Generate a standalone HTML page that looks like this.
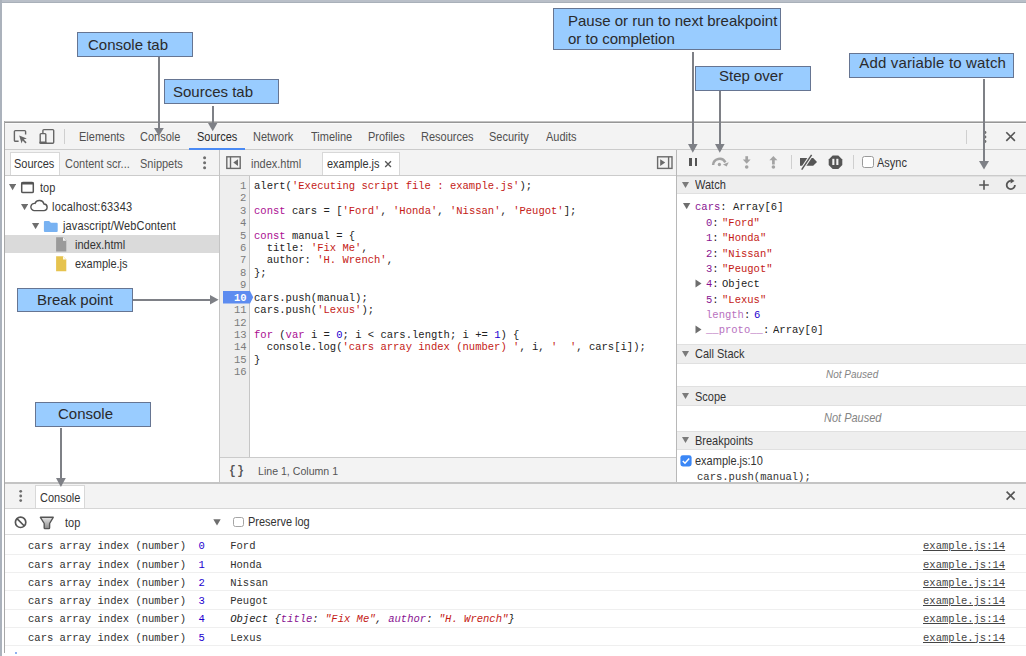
<!DOCTYPE html>
<html><head><meta charset="utf-8"><style>
html,body{margin:0;padding:0;}
body{width:1026px;height:656px;position:relative;overflow:hidden;background:#fff;}
body>div,body>svg{position:absolute;}
.s{position:absolute;transform-origin:0 0;font-family:"Liberation Sans",sans-serif;white-space:pre;}
.m{position:absolute;transform-origin:0 0;font-family:"Liberation Mono",monospace;white-space:pre;}
i{font-style:italic}
</style></head><body>
<div style="left:0px;top:0px;width:1026px;height:2px;background:#b9bfc8;"></div>
<div style="left:0px;top:2px;width:1026px;height:1px;background:#a9b0b9;"></div>
<div style="left:0px;top:0px;width:2px;height:656px;background:#abb2bc;"></div>
<div style="left:4px;top:121px;width:1022px;height:1px;background:#c2c2c2;"></div>
<div style="left:4px;top:122px;width:1022px;height:1px;background:#969696;"></div>
<div style="left:5px;top:123px;width:1021px;height:1px;background:#fafafa;"></div>
<div style="left:4px;top:121px;width:1px;height:532px;background:#a8a8a8;"></div>
<div style="left:5px;top:124px;width:1021px;height:25px;background:#f3f3f3;"></div>
<div style="left:5px;top:149px;width:1021px;height:1px;background:#cbcbcb;"></div>
<div style="left:5px;top:150px;width:1021px;height:25px;background:#f3f3f3;"></div>
<div style="left:5px;top:175px;width:1021px;height:1px;background:#cbcbcb;"></div>
<svg style="left:12px;top:128px;" width="18" height="18" viewBox="0 0 18 18"><path d="M6.6 13.2H3.4a1 1 0 0 1-1-1V3.6a1 1 0 0 1 1-1h9.2a1 1 0 0 1 1 1V6.4" fill="none" stroke="#666" stroke-width="1.4"/><path d="M7.2 7.6l7.6 2.8-3.1 1 2.9 2.9-1.1 1.1-2.9-2.9-1 3.1z" fill="#666"/></svg>
<svg style="left:38px;top:128px;" width="18" height="18" viewBox="0 0 18 18"><rect x="4.9" y="1.6" width="10.8" height="13.6" rx="1" fill="none" stroke="#666" stroke-width="1.4"/><rect x="2.2" y="5.6" width="5.6" height="9.6" rx="0.8" fill="#f3f3f3" stroke="#666" stroke-width="1.4"/><rect x="1.5" y="13.6" width="6.9" height="2.2" rx="0.6" fill="#666"/></svg>
<div style="left:64px;top:129px;width:1px;height:15px;background:#cfcfcf;"></div>
<div class="s" style="left:79.20px;top:129.60px;font-size:11.990px;line-height:14px;color:#505050;transform:scaleX(0.9174);">Elements</div>
<div class="s" style="left:140.20px;top:129.60px;font-size:11.990px;line-height:14px;color:#505050;transform:scaleX(0.9174);">Console</div>
<div class="s" style="left:196.70px;top:129.60px;font-size:11.990px;line-height:14px;color:#2a2a2a;transform:scaleX(0.9174);">Sources</div>
<div class="s" style="left:253.40px;top:129.60px;font-size:11.990px;line-height:14px;color:#505050;transform:scaleX(0.9174);">Network</div>
<div class="s" style="left:311.20px;top:129.60px;font-size:11.990px;line-height:14px;color:#505050;transform:scaleX(0.9174);">Timeline</div>
<div class="s" style="left:368.20px;top:129.60px;font-size:11.990px;line-height:14px;color:#505050;transform:scaleX(0.9174);">Profiles</div>
<div class="s" style="left:421.20px;top:129.60px;font-size:11.990px;line-height:14px;color:#505050;transform:scaleX(0.9174);">Resources</div>
<div class="s" style="left:489.20px;top:129.60px;font-size:11.990px;line-height:14px;color:#505050;transform:scaleX(0.9174);">Security</div>
<div class="s" style="left:545.60px;top:129.60px;font-size:11.990px;line-height:14px;color:#505050;transform:scaleX(0.9174);">Audits</div>
<div style="left:188.5px;top:147.8px;width:56.5px;height:2.0px;background:#4a8af4;"></div>
<div style="left:966px;top:129.5px;width:1px;height:14.5px;background:#cfcfcf;"></div>
<svg style="left:982px;top:130px;" width="6" height="14" viewBox="0 0 6 14"><circle cx="3" cy="2.5" r="1.4" fill="#6e6e6e"/><circle cx="3" cy="7" r="1.4" fill="#6e6e6e"/><circle cx="3" cy="11.5" r="1.4" fill="#6e6e6e"/></svg>
<svg style="left:1004px;top:130px;" width="13" height="13" viewBox="0 0 13 13"><path d="M2.3 2.3l8.6 8.6M10.9 2.3l-8.6 8.6" stroke="#555" stroke-width="1.6"/></svg>
<div style="left:10px;top:152px;width:50px;height:23px;background:#fff;border:1px solid #d8d8d8;border-bottom:none;box-sizing:border-box"></div>
<div class="s" style="left:14.00px;top:156.80px;font-size:11.990px;line-height:14px;color:#333;transform:scaleX(0.9174);">Sources</div>
<div class="s" style="left:65.00px;top:156.80px;font-size:11.990px;line-height:14px;color:#555;transform:scaleX(0.9174);">Content scr...</div>
<div class="s" style="left:140.00px;top:156.80px;font-size:11.990px;line-height:14px;color:#555;transform:scaleX(0.9174);">Snippets</div>
<svg style="left:202px;top:155px;" width="6" height="15" viewBox="0 0 6 15"><circle cx="2.6" cy="2.7" r="1.5" fill="#6e6e6e"/><circle cx="2.6" cy="7.7" r="1.5" fill="#6e6e6e"/><circle cx="2.6" cy="12.8" r="1.5" fill="#6e6e6e"/></svg>
<div style="left:219px;top:150px;width:1px;height:333px;background:#c4c4c4;"></div>
<div style="left:676px;top:150px;width:1px;height:333px;background:#b8b8b8;"></div>
<svg style="left:225px;top:155px;" width="17" height="15" viewBox="0 0 17 15"><rect x="1.8" y="1.8" width="13.4" height="11.6" fill="none" stroke="#6a6a6a" stroke-width="1.4"/><path d="M5.5 1.8v11.6" stroke="#6a6a6a" stroke-width="1.4"/><path d="M13 4.3v6.6L8.3 7.6z" fill="#6a6a6a"/></svg>
<div class="s" style="left:251.00px;top:156.80px;font-size:11.990px;line-height:14px;color:#555;transform:scaleX(0.9174);">index.html</div>
<div style="left:322px;top:152px;width:78px;height:23px;background:#fff;border:1px solid #d8d8d8;border-bottom:none;box-sizing:border-box"></div>
<div class="s" style="left:326.50px;top:156.80px;font-size:11.990px;line-height:14px;color:#333;transform:scaleX(0.9174);">example.js</div>
<svg style="left:383px;top:159px;" width="10" height="10" viewBox="0 0 10 10"><path d="M2.2 2.2l5.8 5.8M8 2.2L2.2 8" stroke="#555" stroke-width="1.3"/></svg>
<svg style="left:655px;top:155px;" width="19" height="15" viewBox="0 0 19 15"><rect x="2.6" y="1.8" width="14.4" height="11.6" fill="none" stroke="#6a6a6a" stroke-width="1.4"/><path d="M13.6 1.8v11.6" stroke="#6a6a6a" stroke-width="1.4"/><path d="M5.2 4.3v6.6l5-3.3z" fill="#6a6a6a"/></svg>
<div style="left:689px;top:158.3px;width:2.7999999999999545px;height:7.399999999999977px;background:#555;"></div>
<div style="left:694.7px;top:158.3px;width:2.7999999999999545px;height:7.399999999999977px;background:#555;"></div>
<svg style="left:710px;top:154px;" width="21" height="16" viewBox="0 0 21 16"><path d="M3.1 11A6.5 6.5 0 0 1 15.4 8.4" fill="none" stroke="#a3a3a3" stroke-width="2.5"/><path d="M12.9 10.4L18.7 8.3 16.7 12.6z" fill="#a3a3a3"/><circle cx="9.4" cy="10.5" r="1.65" fill="#a3a3a3"/></svg>
<svg style="left:740px;top:154px;" width="14" height="16" viewBox="0 0 14 16"><path d="M6.7 2.2v4.6" stroke="#a3a3a3" stroke-width="2.7"/><path d="M2.8 5.6h7.8L6.7 9.7z" fill="#a3a3a3"/><circle cx="6.7" cy="13" r="1.8" fill="#a3a3a3"/></svg>
<svg style="left:766px;top:154px;" width="14" height="16" viewBox="0 0 14 16"><path d="M7.4 5.5v5" stroke="#a3a3a3" stroke-width="2.7"/><path d="M3.4 6.2h8L7.4 2.1z" fill="#a3a3a3"/><circle cx="7.4" cy="13" r="1.8" fill="#a3a3a3"/></svg>
<div style="left:790.5px;top:154.6px;width:1.0px;height:14.599999999999994px;background:#cfcfcf;"></div>
<svg style="left:798px;top:153px;" width="21" height="18" viewBox="0 0 21 18"><path d="M2 5H15.2L19 9 15.2 12.8H2z" fill="#555"/><path d="M3.7 16.8L13.6 1.8" stroke="#f3f3f3" stroke-width="3.6"/><path d="M3.7 16.6L13.6 1.8" stroke="#555" stroke-width="1.5"/></svg>
<svg style="left:828px;top:155px;" width="15" height="15" viewBox="0 0 15 15"><path d="M4.7 0.4h5.6l4 4v5.6l-4 4H4.7l-4-4V4.4z" fill="#555"/><rect x="4.3" y="3.8" width="2.1" height="6.2" fill="#f3f3f3"/><rect x="8.3" y="3.8" width="2.1" height="6.2" fill="#f3f3f3"/></svg>
<div style="left:853px;top:154.6px;width:1px;height:14.599999999999994px;background:#cfcfcf;"></div>
<div style="left:862.3px;top:156.4px;width:11.400000000000091px;height:11.199999999999989px;background:#fff;border:1px solid #9a9a9a;border-radius:2.5px;box-sizing:border-box"></div>
<div class="s" style="left:877.00px;top:155.60px;font-size:11.990px;line-height:14px;color:#333;transform:scaleX(0.9174);">Async</div>
<div style="left:5px;top:176px;width:214px;height:307px;background:#fff;"></div>
<div style="left:5px;top:235px;width:214px;height:18.400000000000006px;background:#dadada;"></div>
<svg style="left:8.9px;top:184.4px;" width="7.2" height="6.2" viewBox="0 0 7.2 6.2"><path d="M0 0H7.2L3.6 6.2z" fill="#6e6e6e"/></svg>
<svg style="left:20px;top:181px;" width="15" height="13" viewBox="0 0 15 13"><rect x="1.7" y="1.4" width="11.6" height="10.2" rx="1.2" fill="none" stroke="#555" stroke-width="1.5"/><rect x="1.5" y="1.2" width="12" height="2.3" fill="#555"/></svg>
<div class="s" style="left:40.00px;top:180.80px;font-size:11.990px;line-height:14px;color:#333;transform:scaleX(0.9174);">top</div>
<svg style="left:20.6px;top:203.5px;" width="7.2" height="6.2" viewBox="0 0 7.2 6.2"><path d="M0 0H7.2L3.6 6.2z" fill="#6e6e6e"/></svg>
<svg style="left:29px;top:199px;" width="19" height="13" viewBox="0 0 19 13"><path d="M5 11.6h9.6a3.3 3.3 0 0 0 .4-6.6A4.8 4.8 0 0 0 6 4.4 3.6 3.6 0 0 0 5 11.6z" fill="none" stroke="#555" stroke-width="1.4"/></svg>
<div class="s" style="left:51.50px;top:199.90px;font-size:11.990px;line-height:14px;color:#333;transform:scaleX(0.9174);letter-spacing:0.24px">localhost:63343</div>
<svg style="left:32.4px;top:222.6px;" width="7.2" height="6.2" viewBox="0 0 7.2 6.2"><path d="M0 0H7.2L3.6 6.2z" fill="#6e6e6e"/></svg>
<svg style="left:43px;top:220px;" width="16" height="13" viewBox="0 0 16 13"><path d="M1.9 0.9h4.2l1.8 1.8h5.8a1 1 0 0 1 1 1v7.2a1 1 0 0 1-1 1H1.9a1 1 0 0 1-1-1V1.9a1 1 0 0 1 1-1z" fill="#78b2f2"/></svg>
<div class="s" style="left:62.50px;top:218.90px;font-size:11.990px;line-height:14px;color:#333;transform:scaleX(0.9174);letter-spacing:0.13px">javascript/WebContent</div>
<svg style="left:55px;top:237px;" width="13" height="16" viewBox="0 0 13 16"><path d="M1.1 0.3h7l3.2 3.3v11H1.1z" fill="#9a9a9a"/><path d="M8 0.3v3.4h3.3z" fill="#fff" opacity="0.9"/></svg>
<div class="s" style="left:74.50px;top:238.00px;font-size:11.990px;line-height:14px;color:#333;transform:scaleX(0.9174);">index.html</div>
<svg style="left:55px;top:256px;" width="13" height="16" viewBox="0 0 13 16"><path d="M1.1 0.2h7l3.2 3.3V15.2H1.1z" fill="#e6c34e"/><path d="M8 0.2v3.4h3.3z" fill="#fff" opacity="0.9"/></svg>
<div class="s" style="left:74.50px;top:257.00px;font-size:11.990px;line-height:14px;color:#333;transform:scaleX(0.9174);">example.js</div>
<div style="left:220px;top:176px;width:456px;height:281px;background:#fff;"></div>
<div style="left:220px;top:176px;width:29px;height:281px;background:#eeeeee;"></div>
<div style="left:249px;top:176px;width:1px;height:281px;background:#c6c6c6;"></div>
<div class="m" style="left:239.89px;top:179.90px;font-size:11.289px;line-height:12px;color:#7b7b7b;transform:scaleX(0.9346);">1</div>
<div class="m" style="left:254.00px;top:179.90px;font-size:11.289px;line-height:12px;color:#222;transform:scaleX(0.9346);"><span style="color:#222">alert(</span><span style="color:#c41a16">'Executing script file : example.js'</span><span style="color:#222">);</span></div>
<div class="m" style="left:239.89px;top:192.33px;font-size:11.289px;line-height:12px;color:#7b7b7b;transform:scaleX(0.9346);">2</div>
<div class="m" style="left:239.89px;top:204.76px;font-size:11.289px;line-height:12px;color:#7b7b7b;transform:scaleX(0.9346);">3</div>
<div class="m" style="left:254.00px;top:204.76px;font-size:11.289px;line-height:12px;color:#222;transform:scaleX(0.9346);"><span style="color:#aa0d91">const</span><span style="color:#222"> cars = [</span><span style="color:#c41a16">'Ford'</span><span style="color:#222">, </span><span style="color:#c41a16">'Honda'</span><span style="color:#222">, </span><span style="color:#c41a16">'Nissan'</span><span style="color:#222">, </span><span style="color:#c41a16">'Peugot'</span><span style="color:#222">];</span></div>
<div class="m" style="left:239.89px;top:217.19px;font-size:11.289px;line-height:12px;color:#7b7b7b;transform:scaleX(0.9346);">4</div>
<div class="m" style="left:239.89px;top:229.62px;font-size:11.289px;line-height:12px;color:#7b7b7b;transform:scaleX(0.9346);">5</div>
<div class="m" style="left:254.00px;top:229.62px;font-size:11.289px;line-height:12px;color:#222;transform:scaleX(0.9346);"><span style="color:#aa0d91">const</span><span style="color:#222"> manual = {</span></div>
<div class="m" style="left:239.89px;top:242.05px;font-size:11.289px;line-height:12px;color:#7b7b7b;transform:scaleX(0.9346);">6</div>
<div class="m" style="left:254.00px;top:242.05px;font-size:11.289px;line-height:12px;color:#222;transform:scaleX(0.9346);"><span style="color:#222">  title: </span><span style="color:#c41a16">'Fix Me'</span><span style="color:#222">,</span></div>
<div class="m" style="left:239.89px;top:254.48px;font-size:11.289px;line-height:12px;color:#7b7b7b;transform:scaleX(0.9346);">7</div>
<div class="m" style="left:254.00px;top:254.48px;font-size:11.289px;line-height:12px;color:#222;transform:scaleX(0.9346);"><span style="color:#222">  author: </span><span style="color:#c41a16">'H. Wrench'</span><span style="color:#222">,</span></div>
<div class="m" style="left:239.89px;top:266.91px;font-size:11.289px;line-height:12px;color:#7b7b7b;transform:scaleX(0.9346);">8</div>
<div class="m" style="left:254.00px;top:266.91px;font-size:11.289px;line-height:12px;color:#222;transform:scaleX(0.9346);"><span style="color:#222">};</span></div>
<div class="m" style="left:239.89px;top:279.34px;font-size:11.289px;line-height:12px;color:#7b7b7b;transform:scaleX(0.9346);">9</div>
<svg style="left:223px;top:291.27px;" width="31" height="13" viewBox="0 0 31 13"><path d="M0 0H27L30.2 6.25 27 12.5H0z" fill="#5d8cf0"/></svg>
<div class="m" style="left:233.58px;top:291.77px;font-size:11.289px;line-height:12px;color:#fff;transform:scaleX(0.9346);font-weight:bold">10</div>
<div class="m" style="left:254.00px;top:291.77px;font-size:11.289px;line-height:12px;color:#222;transform:scaleX(0.9346);"><span style="color:#222">cars.push(manual);</span></div>
<div class="m" style="left:233.58px;top:304.20px;font-size:11.289px;line-height:12px;color:#7b7b7b;transform:scaleX(0.9346);">11</div>
<div class="m" style="left:254.00px;top:304.20px;font-size:11.289px;line-height:12px;color:#222;transform:scaleX(0.9346);"><span style="color:#222">cars.push(</span><span style="color:#c41a16">'Lexus'</span><span style="color:#222">);</span></div>
<div class="m" style="left:233.58px;top:316.63px;font-size:11.289px;line-height:12px;color:#7b7b7b;transform:scaleX(0.9346);">12</div>
<div class="m" style="left:233.58px;top:329.06px;font-size:11.289px;line-height:12px;color:#7b7b7b;transform:scaleX(0.9346);">13</div>
<div class="m" style="left:254.00px;top:329.06px;font-size:11.289px;line-height:12px;color:#222;transform:scaleX(0.9346);"><span style="color:#aa0d91">for</span><span style="color:#222"> (</span><span style="color:#aa0d91">var</span><span style="color:#222"> i = </span><span style="color:#1c00cf">0</span><span style="color:#222">; i &lt; cars.length; i += </span><span style="color:#1c00cf">1</span><span style="color:#222">) {</span></div>
<div class="m" style="left:233.58px;top:341.49px;font-size:11.289px;line-height:12px;color:#7b7b7b;transform:scaleX(0.9346);">14</div>
<div class="m" style="left:254.00px;top:341.49px;font-size:11.289px;line-height:12px;color:#222;transform:scaleX(0.9346);"><span style="color:#222">  console.log(</span><span style="color:#c41a16">'cars array index (number) '</span><span style="color:#222">, i, </span><span style="color:#c41a16">'  '</span><span style="color:#222">, cars[i]);</span></div>
<div class="m" style="left:233.58px;top:353.92px;font-size:11.289px;line-height:12px;color:#7b7b7b;transform:scaleX(0.9346);">15</div>
<div class="m" style="left:254.00px;top:353.92px;font-size:11.289px;line-height:12px;color:#222;transform:scaleX(0.9346);"><span style="color:#222">}</span></div>
<div class="m" style="left:233.58px;top:366.35px;font-size:11.289px;line-height:12px;color:#7b7b7b;transform:scaleX(0.9346);">16</div>
<div style="left:220px;top:456.5px;width:456px;height:1.0px;background:#cbcbcb;"></div>
<div style="left:220px;top:457.5px;width:456px;height:25.5px;background:#f3f3f3;"></div>
<div class="m" style="left:228.60px;top:464.30px;font-size:11.984px;line-height:14px;color:#555;transform:scaleX(0.9346);font-weight:bold;letter-spacing:1.6px">{}</div>
<div class="s" style="left:257.80px;top:465.20px;font-size:11.554px;line-height:12px;color:#555;transform:scaleX(0.9174);">Line 1, Column 1</div>
<div style="left:677px;top:176px;width:349px;height:307px;background:#fff;"></div>
<div style="left:677px;top:176px;width:349px;height:17.5px;background:#eeeeee;"></div>
<div style="left:677px;top:175.5px;width:349px;height:1.0px;background:#e0e0e0;"></div>
<div style="left:677px;top:193.0px;width:349px;height:1.0px;background:#e0e0e0;"></div>
<svg style="left:682.3px;top:181.75px;" width="7" height="6" viewBox="0 0 7 6"><path d="M0 0H7L3.5 6z" fill="#7a7a7a"/></svg>
<div class="s" style="left:694.80px;top:177.80px;font-size:11.990px;line-height:14px;color:#333;transform:scaleX(0.9174);">Watch</div>
<svg style="left:978px;top:179px;" width="12" height="12" viewBox="0 0 12 12"><path d="M6 1.2v9.6M1.2 6h9.6" stroke="#555" stroke-width="1.6"/></svg>
<svg style="left:1004px;top:178px;" width="13" height="13" viewBox="0 0 13 13"><path d="M6.9 2.9A4.1 4.1 0 1 0 10.9 7" fill="none" stroke="#555" stroke-width="1.8"/><path d="M6.6 0.3v5.2l3.9-2.6z" fill="#555"/></svg>
<svg style="left:683.3px;top:203.1px;" width="7.3" height="6.2" viewBox="0 0 7.3 6.2"><path d="M0 0H7.3L3.65 6.2z" fill="#6e6e6e"/></svg>
<div class="m" style="left:695.00px;top:200.90px;font-size:11.289px;line-height:12px;color:#222;transform:scaleX(0.9346);"><span style="color:#881391">cars</span><span style="color:#222">: Array[6]</span></div>
<div class="m" style="left:705.50px;top:217.10px;font-size:11.289px;line-height:12px;color:#222;transform:scaleX(0.9346);"><span style="color:#881391">0</span><span style="color:#222">:</span></div>
<div class="m" style="left:722.40px;top:217.10px;font-size:11.289px;line-height:12px;color:#222;transform:scaleX(0.9346);"><span style="color:#c41a16">"Ford"</span></div>
<div class="m" style="left:705.50px;top:232.40px;font-size:11.289px;line-height:12px;color:#222;transform:scaleX(0.9346);"><span style="color:#881391">1</span><span style="color:#222">:</span></div>
<div class="m" style="left:722.40px;top:232.40px;font-size:11.289px;line-height:12px;color:#222;transform:scaleX(0.9346);"><span style="color:#c41a16">"Honda"</span></div>
<div class="m" style="left:705.50px;top:247.70px;font-size:11.289px;line-height:12px;color:#222;transform:scaleX(0.9346);"><span style="color:#881391">2</span><span style="color:#222">:</span></div>
<div class="m" style="left:722.40px;top:247.70px;font-size:11.289px;line-height:12px;color:#222;transform:scaleX(0.9346);"><span style="color:#c41a16">"Nissan"</span></div>
<div class="m" style="left:705.50px;top:263.00px;font-size:11.289px;line-height:12px;color:#222;transform:scaleX(0.9346);"><span style="color:#881391">3</span><span style="color:#222">:</span></div>
<div class="m" style="left:722.40px;top:263.00px;font-size:11.289px;line-height:12px;color:#222;transform:scaleX(0.9346);"><span style="color:#c41a16">"Peugot"</span></div>
<svg style="left:695.4px;top:279.0px;" width="7" height="9" viewBox="0 0 7 9"><path d="M0.5 0.5V8.5L6.5 4.5z" fill="#6e6e6e"/></svg>
<div class="m" style="left:705.50px;top:278.30px;font-size:11.289px;line-height:12px;color:#222;transform:scaleX(0.9346);"><span style="color:#881391">4</span><span style="color:#222">:</span></div>
<div class="m" style="left:722.40px;top:278.30px;font-size:11.289px;line-height:12px;color:#222;transform:scaleX(0.9346);">Object</div>
<div class="m" style="left:705.50px;top:293.60px;font-size:11.289px;line-height:12px;color:#222;transform:scaleX(0.9346);"><span style="color:#881391">5</span><span style="color:#222">:</span></div>
<div class="m" style="left:722.40px;top:293.60px;font-size:11.289px;line-height:12px;color:#222;transform:scaleX(0.9346);"><span style="color:#c41a16">"Lexus"</span></div>
<div class="m" style="left:705.50px;top:308.90px;font-size:11.289px;line-height:12px;color:#222;transform:scaleX(0.9346);"><span style="color:#b871c0">length</span><span style="color:#222">:</span></div>
<div class="m" style="left:754.00px;top:308.90px;font-size:11.289px;line-height:12px;color:#222;transform:scaleX(0.9346);"><span style="color:#1c00cf">6</span></div>
<svg style="left:695.4px;top:324.9px;" width="7" height="9" viewBox="0 0 7 9"><path d="M0.5 0.5V8.5L6.5 4.5z" fill="#6e6e6e"/></svg>
<div class="m" style="left:705.50px;top:324.20px;font-size:11.289px;line-height:12px;color:#222;transform:scaleX(0.9346);"><span style="color:#b871c0">__proto__</span><span style="color:#222">:</span></div>
<div class="m" style="left:773.00px;top:324.20px;font-size:11.289px;line-height:12px;color:#222;transform:scaleX(0.9346);">Array[0]</div>
<div style="left:677px;top:344px;width:349px;height:19px;background:#eeeeee;"></div>
<div style="left:677px;top:343.5px;width:349px;height:1.0px;background:#e0e0e0;"></div>
<div style="left:677px;top:362.5px;width:349px;height:1.0px;background:#e0e0e0;"></div>
<svg style="left:682.3px;top:350.5px;" width="7" height="6" viewBox="0 0 7 6"><path d="M0 0H7L3.5 6z" fill="#7a7a7a"/></svg>
<div class="s" style="left:694.80px;top:347.30px;font-size:11.990px;line-height:14px;color:#333;transform:scaleX(0.9174);">Call Stack</div>
<div class="s" style="left:826.00px;top:368.00px;font-size:10.900px;line-height:12px;color:#858585;transform:scaleX(0.9174);font-style:italic">Not Paused</div>
<div style="left:677px;top:386px;width:349px;height:19.30000000000001px;background:#eeeeee;"></div>
<div style="left:677px;top:385.5px;width:349px;height:1.0px;background:#e0e0e0;"></div>
<div style="left:677px;top:404.8px;width:349px;height:1.0px;background:#e0e0e0;"></div>
<svg style="left:682.3px;top:392.65px;" width="7" height="6" viewBox="0 0 7 6"><path d="M0 0H7L3.5 6z" fill="#7a7a7a"/></svg>
<div class="s" style="left:694.80px;top:389.50px;font-size:11.990px;line-height:14px;color:#333;transform:scaleX(0.9174);">Scope</div>
<div class="s" style="left:823.80px;top:410.90px;font-size:11.990px;line-height:14px;color:#858585;transform:scaleX(0.9174);font-style:italic">Not Paused</div>
<div style="left:677px;top:431.2px;width:349px;height:18.400000000000034px;background:#eeeeee;"></div>
<div style="left:677px;top:430.7px;width:349px;height:1.0px;background:#e0e0e0;"></div>
<div style="left:677px;top:449.1px;width:349px;height:1.0px;background:#e0e0e0;"></div>
<svg style="left:682.3px;top:437.4px;" width="7" height="6" viewBox="0 0 7 6"><path d="M0 0H7L3.5 6z" fill="#7a7a7a"/></svg>
<div class="s" style="left:694.80px;top:434.10px;font-size:11.990px;line-height:14px;color:#333;transform:scaleX(0.9174);">Breakpoints</div>
<svg style="left:680px;top:455px;" width="12" height="12" viewBox="0 0 12 12"><rect x="0.4" y="0.2" width="11.2" height="11.2" rx="2.4" fill="#3b87f6"/><path d="M2.8 5.9l2.2 2.3 4.2-4.6" fill="none" stroke="#fff" stroke-width="1.5"/></svg>
<div class="s" style="left:694.60px;top:454.30px;font-size:11.990px;line-height:14px;color:#333;transform:scaleX(0.9174);">example.js:10</div>
<div class="m" style="left:696.50px;top:471.20px;font-size:11.289px;line-height:12px;color:#333;transform:scaleX(0.9346);">cars.push(manual);</div>
<div style="left:5px;top:482px;width:1021px;height:2px;background:#c4c4c4;"></div>
<div style="left:5px;top:484px;width:1021px;height:24px;background:#f3f3f3;"></div>
<div style="left:5px;top:508px;width:1021px;height:1px;background:#d6d6d6;"></div>
<svg style="left:18px;top:489.4px;" width="6" height="14" viewBox="0 0 6 14"><circle cx="2.7" cy="2.3" r="1.4" fill="#6e6e6e"/><circle cx="2.7" cy="7" r="1.4" fill="#6e6e6e"/><circle cx="2.7" cy="11.6" r="1.4" fill="#6e6e6e"/></svg>
<div style="left:35px;top:485px;width:50px;height:23px;background:#fff;border:1px solid #d8d8d8;border-bottom:none;box-sizing:border-box"></div>
<div class="s" style="left:39.50px;top:490.60px;font-size:11.990px;line-height:14px;color:#333;transform:scaleX(0.9174);">Console</div>
<svg style="left:1004px;top:489px;" width="13" height="13" viewBox="0 0 13 13"><path d="M2.6 2.6l8 8M10.6 2.6l-8 8" stroke="#555" stroke-width="1.6"/></svg>
<div style="left:5px;top:509px;width:1021px;height:25px;background:#fff;"></div>
<div style="left:5px;top:534px;width:1021px;height:1px;background:#dddddd;"></div>
<svg style="left:13px;top:515px;" width="15" height="15" viewBox="0 0 15 15"><circle cx="7.6" cy="7.3" r="5.2" fill="none" stroke="#555" stroke-width="1.7"/><path d="M4 3.7l7.3 7.3" stroke="#555" stroke-width="1.7"/></svg>
<svg style="left:38px;top:515px;" width="17" height="15" viewBox="0 0 17 15"><defs><linearGradient id="fg" x1="0" y1="0" x2="0" y2="1"><stop offset="0" stop-color="#e6e6e6"/><stop offset="1" stop-color="#8a8a8a"/></linearGradient></defs><path d="M2.4 2.3h12.8l-3.6 6.2v4.3a0.8 0.8 0 0 1-0.8 0.8H7a0.8 0.8 0 0 1-0.8-0.8V8.5z" fill="url(#fg)" stroke="#555" stroke-width="1.4" stroke-linejoin="round"/></svg>
<div class="s" style="left:65.00px;top:515.60px;font-size:11.990px;line-height:14px;color:#333;transform:scaleX(0.9174);">top</div>
<svg style="left:212.5px;top:519px;" width="8" height="7" viewBox="0 0 8 7"><path d="M0.3 0.3h7.4L4 6.5z" fill="#6e6e6e"/></svg>
<div style="left:233.3px;top:517px;width:10.299999999999983px;height:9.899999999999977px;background:#fff;border:1px solid #a5a5a5;border-radius:2.5px;box-sizing:border-box"></div>
<div class="s" style="left:247.50px;top:515.20px;font-size:11.990px;line-height:14px;color:#333;transform:scaleX(0.9174);">Preserve log</div>
<div style="left:5px;top:553.8px;width:1021px;height:1.0px;background:#efefef;"></div>
<div style="left:5px;top:572.1px;width:1021px;height:1.0px;background:#efefef;"></div>
<div style="left:5px;top:590.3px;width:1021px;height:1.0px;background:#efefef;"></div>
<div style="left:5px;top:608.5px;width:1021px;height:1.0px;background:#efefef;"></div>
<div style="left:5px;top:626.8px;width:1021px;height:1.0px;background:#efefef;"></div>
<div style="left:5px;top:645.1px;width:1021px;height:1.0px;background:#efefef;"></div>
<div class="m" style="left:28.00px;top:540.40px;font-size:11.289px;line-height:12px;color:#303030;transform:scaleX(0.9346);">cars array index (number)  <span style="color:#1c00cf">0</span>    Ford</div>
<div class="m" style="left:922.60px;top:540.40px;font-size:11.289px;line-height:12px;color:#444;transform:scaleX(0.9346);text-decoration:underline">example.js:14</div>
<div class="m" style="left:28.00px;top:558.66px;font-size:11.289px;line-height:12px;color:#303030;transform:scaleX(0.9346);">cars array index (number)  <span style="color:#1c00cf">1</span>    Honda</div>
<div class="m" style="left:922.60px;top:558.66px;font-size:11.289px;line-height:12px;color:#444;transform:scaleX(0.9346);text-decoration:underline">example.js:14</div>
<div class="m" style="left:28.00px;top:576.92px;font-size:11.289px;line-height:12px;color:#303030;transform:scaleX(0.9346);">cars array index (number)  <span style="color:#1c00cf">2</span>    Nissan</div>
<div class="m" style="left:922.60px;top:576.92px;font-size:11.289px;line-height:12px;color:#444;transform:scaleX(0.9346);text-decoration:underline">example.js:14</div>
<div class="m" style="left:28.00px;top:595.18px;font-size:11.289px;line-height:12px;color:#303030;transform:scaleX(0.9346);">cars array index (number)  <span style="color:#1c00cf">3</span>    Peugot</div>
<div class="m" style="left:922.60px;top:595.18px;font-size:11.289px;line-height:12px;color:#444;transform:scaleX(0.9346);text-decoration:underline">example.js:14</div>
<div class="m" style="left:28.00px;top:613.44px;font-size:11.289px;line-height:12px;color:#303030;transform:scaleX(0.9346);">cars array index (number)  <span style="color:#1c00cf">4</span>    <i><span style="color:#222">Object {</span><span style="color:#881391">title</span><span style="color:#222">: </span><span style="color:#c41a16">"Fix Me"</span><span style="color:#222">, </span><span style="color:#881391">author</span><span style="color:#222">: </span><span style="color:#c41a16">"H. Wrench"</span><span style="color:#222">}</span></i></div>
<div class="m" style="left:922.60px;top:613.44px;font-size:11.289px;line-height:12px;color:#444;transform:scaleX(0.9346);text-decoration:underline">example.js:14</div>
<div class="m" style="left:28.00px;top:631.70px;font-size:11.289px;line-height:12px;color:#303030;transform:scaleX(0.9346);">cars array index (number)  <span style="color:#1c00cf">5</span>    Lexus</div>
<div class="m" style="left:922.60px;top:631.70px;font-size:11.289px;line-height:12px;color:#444;transform:scaleX(0.9346);text-decoration:underline">example.js:14</div>
<div style="left:14.5px;top:652px;width:2.5px;height:1.5px;background:#8fb0f0;"></div>
<div style="left:77px;top:32px;width:116px;height:24.5px;background:#99ccff;border:1px solid #667592;box-sizing:border-box"></div>
<div class="s" style="left:88.00px;top:36.10px;font-size:15.000px;line-height:17px;color:#2a2a2c;">Console tab</div>
<div style="left:158px;top:56.5px;width:2px;height:72.5px;background:#7e8086;"></div>
<svg style="left:154.1px;top:128px;" width="9.8" height="8" viewBox="0 0 9.8 8"><path d="M0 0H9.8L4.9 8z" fill="#7e8086"/></svg>
<div style="left:164px;top:79px;width:115px;height:25px;background:#99ccff;border:1px solid #667592;box-sizing:border-box"></div>
<div class="s" style="left:173.00px;top:83.00px;font-size:15.000px;line-height:17px;color:#2a2a2c;">Sources tab</div>
<div style="left:212px;top:106px;width:2px;height:18px;background:#7e8086;"></div>
<svg style="left:208.3px;top:123.4px;" width="9.4" height="8.3" viewBox="0 0 9.4 8.3"><path d="M0 0H9.4L4.7 8.3z" fill="#7e8086"/></svg>
<div style="left:553px;top:8px;width:227.5px;height:42px;background:#99ccff;border:1px solid #667592;box-sizing:border-box"></div>
<div class="s" style="left:568.00px;top:11.90px;font-size:15.000px;line-height:17px;color:#2a2a2c;">Pause or run to next breakpoint</div>
<div class="s" style="left:568.00px;top:29.70px;font-size:15.000px;line-height:17px;color:#2a2a2c;">or to completion</div>
<div style="left:692px;top:52px;width:2px;height:93px;background:#7e8086;"></div>
<svg style="left:688.2px;top:144px;" width="9.6" height="8.8" viewBox="0 0 9.6 8.8"><path d="M0 0H9.6L4.8 8.8z" fill="#7e8086"/></svg>
<div style="left:695px;top:66px;width:116px;height:25px;background:#99ccff;border:1px solid #667592;box-sizing:border-box"></div>
<div class="s" style="left:719.00px;top:67.00px;font-size:15.000px;line-height:17px;color:#2a2a2c;">Step over</div>
<div style="left:719px;top:91px;width:2px;height:54px;background:#7e8086;"></div>
<svg style="left:715.2px;top:144px;" width="9.6" height="8.8" viewBox="0 0 9.6 8.8"><path d="M0 0H9.6L4.8 8.8z" fill="#7e8086"/></svg>
<div style="left:849px;top:53px;width:165px;height:24.700000000000003px;background:#99ccff;border:1px solid #667592;box-sizing:border-box"></div>
<div class="s" style="left:859.30px;top:53.80px;font-size:15.000px;line-height:17px;color:#2a2a2c;letter-spacing:0.16px">Add variable to watch</div>
<div style="left:983px;top:79px;width:2px;height:83px;background:#7e8086;"></div>
<svg style="left:979.0px;top:161.2px;" width="10" height="8.6" viewBox="0 0 10 8.6"><path d="M0 0H10L5.0 8.6z" fill="#7e8086"/></svg>
<div style="left:17px;top:287.5px;width:116px;height:24.5px;background:#99ccff;border:1px solid #667592;box-sizing:border-box"></div>
<div class="s" style="left:37.00px;top:290.80px;font-size:15.000px;line-height:17px;color:#2a2a2c;">Break point</div>
<div style="left:133px;top:299px;width:78px;height:2px;background:#7e8086;"></div>
<svg style="left:210px;top:295.2px;" width="8.6" height="9.6" viewBox="0 0 8.6 9.6"><path d="M0 0V9.6L8.6 4.8z" fill="#7e8086"/></svg>
<div style="left:35px;top:402px;width:116px;height:24.80000000000001px;background:#99ccff;border:1px solid #667592;box-sizing:border-box"></div>
<div class="s" style="left:58.00px;top:405.20px;font-size:15.000px;line-height:17px;color:#2a2a2c;">Console</div>
<div style="left:60px;top:428px;width:2px;height:51px;background:#7e8086;"></div>
<svg style="left:56.1px;top:478px;" width="9.8" height="9" viewBox="0 0 9.8 9"><path d="M0 0H9.8L4.9 9z" fill="#7e8086"/></svg>
</body></html>
